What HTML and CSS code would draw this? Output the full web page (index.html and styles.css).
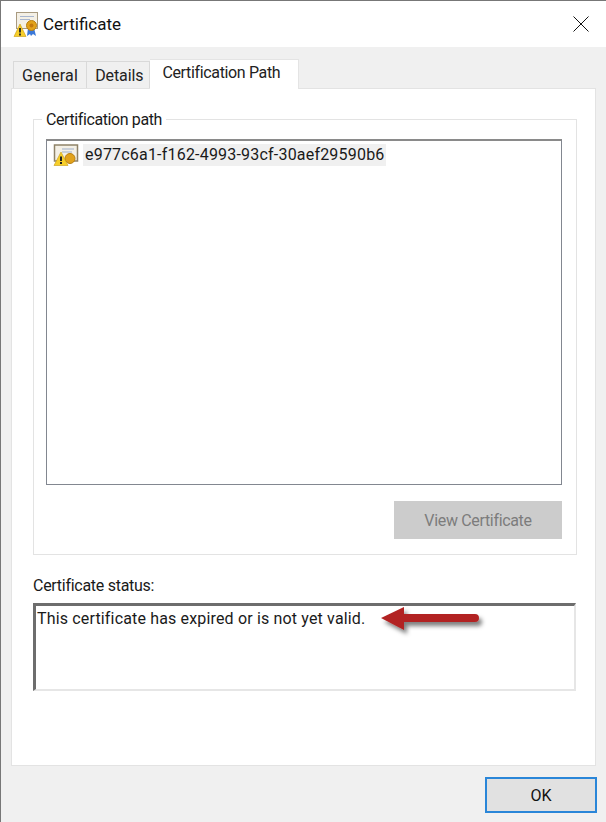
FILE: index.html
```html
<!DOCTYPE html>
<html lang="en">
<head>
    <meta charset="UTF-8">
    <title>Certificate</title>
    <link rel="stylesheet" href="styles.css">
</head>
<body>

    <div class="window">
        <div class="titlebar">
            <svg class="cert-icon" width="26" height="26" viewBox="0 0 26 26">
                <rect x="3.500" y="1.500" width="21" height="16" fill="#f4f0e6" stroke="#a89a80"/>
                <path d="M7 5.500h14M7 8.500h10" stroke="#a8b6cf"/>
                <path d="M15 17l-1 8 3-2 1 2 2-2 3 2-2-8z" fill="#3b78d8"/>
                <circle cx="18.500" cy="14.500" r="5" fill="#e2a21b" stroke="#b97f10"/>
                <circle cx="18.500" cy="14.500" r="2" fill="#c4780f"/>
                <path d="M1 25.500L7 13l6 12.500z" fill="#f7cf2a" stroke="#c79a10" stroke-width=".6"/>
                <path d="M7 17v4.500M7 22.500v2" stroke="#222" stroke-width="1.800"/>
            </svg>
            <span class="title">Certificate</span>
            <svg class="close" width="16" height="16" viewBox="0 0 16 16">
                <path d="M.5 .5l15 15M15.500 .5l-15 15" stroke="#111" fill="none"/>
            </svg>
        </div>

        <div class="content">
            <div class="tabs">
                <div class="tab tab-general">General</div>
                <div class="tab tab-details">Details</div>
                <div class="tab active">Certification Path</div>
            </div>

            <div class="panel">
                <div class="groupbox">
                    <span class="legend">Certification path</span>
                    <div class="path-list">
                        <div class="path-item">
                            <svg class="cert-icon-small" width="26" height="22" viewBox="0 0 26 22">
                                <rect x="1.500" y="1" width="23" height="16" fill="#f4f0e6" stroke="#8f8268" stroke-width="1.500"/>
                                <path d="M9 5h12M9 8h10" stroke="#9fb0cc"/>
                                <circle cx="17" cy="14.500" r="5" fill="#e2a21b" stroke="#b97f10"/>
                                <path d="M1 21.500L8 8l7 13.500z" fill="#f7cf2a" stroke="#c79a10" stroke-width=".6"/>
                                <path d="M8 12.500v4.500M8 18v2" stroke="#222" stroke-width="2"/>
                            </svg>
                            <span class="path-name">e977c6a1-f162-4993-93cf-30aef29590b6</span>
                        </div>
                    </div>
                    <div class="view-row">
                        <button class="btn view-btn" disabled>View Certificate</button>
                    </div>
                </div>

                <div class="status-label">Certificate status:</div>
                <div class="status-box">This certificate has expired or is not yet valid.</div>

                <svg class="arrow" width="112" height="34" viewBox="0 0 112 34">
                    <defs>
                        <filter id="arrow-shadow" x="-20%" y="-40%" width="140%" height="200%">
                            <feDropShadow dx="3" dy="4" stdDeviation="2" flood-color="#000" flood-opacity=".5"/>
                        </filter>
                    </defs>
                    <path d="M2 14L25 3v7h71a4 4 0 0 1 0 8H25v8z" fill="#b22222" filter="url(#arrow-shadow)"/>
                </svg>
            </div>
        </div>

        <div class="footer">
            <button class="btn ok-btn">OK</button>
        </div>
    </div>

</body>
</html>
```

FILE: styles.css
```css
html, body {
    margin: 0;
    padding: 0;
}

body {
    width: 606px;
    height: 822px;
    overflow: hidden;
    font-family: Roboto, "Noto Sans", sans-serif;
    font-size: 16px;
    color: #1a1a1a;
    background: #f0f0f0;
}

.window {
    height: 821px;
    border-top: 1px solid #777;
    border-left: 1px solid #777;
    display: flex;
    flex-direction: column;
}

.titlebar {
    height: 46px;
    flex: none;
    background: #fff;
    display: flex;
    align-items: center;
    padding: 0 17px 0 12px;
    gap: 4px;
}

.title {
    font-size: 17px;
    color: #111;
    flex: 1;
}

.content {
    flex: 1;
    padding: 12px 10px 0 10px;
    display: flex;
    flex-direction: column;
}

.tabs {
    display: flex;
    align-items: flex-end;
    height: 29px;
    padding-left: 2px;
}

.tab {
    height: 27px;
    line-height: 28px;
    padding: 0 8px;
    background: #f0f0f0;
    border: 1px solid #d9d9d9;
    border-bottom: none;
    box-sizing: border-box;
    color: #222;
}

.tab + .tab {
    border-left: none;
}

.tab-general {
    letter-spacing: .25px;
}

.tab-details {
    padding-right: 6px;
    letter-spacing: -.1px;
}

.tab.active {
    height: 30px;
    line-height: 26px;
    padding: 0 18px 0 12px;
    margin-bottom: -1px;
    letter-spacing: -.35px;
    background: #fff;
    border-color: #e4e4e4;
    position: relative;
    z-index: 1;
}

.panel {
    position: relative;
    height: 678px;
    box-sizing: border-box;
    background: #fff;
    border: 1px solid #e3e3e3;
    padding: 30px 18px 0 21px;
}

.groupbox {
    position: relative;
    height: 436px;
    box-sizing: border-box;
    border: 1px solid #e3e3e3;
    padding: 19px 14px 0 12px;
}

.legend {
    position: absolute;
    top: -10px;
    left: 8px;
    padding: 0 4px;
    background: #fff;
    line-height: 20px;
    letter-spacing: -.4px;
}

.path-list {
    height: 346px;
    box-sizing: border-box;
    border: 1px solid #828790;
    border-top: 2px solid #8a8a8a;
    padding: 3px 6px;
}

.path-item {
    display: flex;
    align-items: center;
    height: 22px;
    gap: 4px;
}

.path-name {
    background: #f0f0f0;
    line-height: 22px;
    padding: 0 1px 0 2px;
    letter-spacing: .2px;
}

.view-row {
    display: flex;
    justify-content: flex-end;
    margin-top: 16px;
}

.btn {
    font-family: inherit;
    font-size: 16px;
    box-sizing: border-box;
}

.view-btn {
    width: 168px;
    height: 38px;
    background: #cccccc;
    border: none;
    color: #7c7c7c;
    letter-spacing: -.33px;
}

.status-label {
    margin-top: 21px;
    line-height: 20px;
    letter-spacing: -.28px;
}

.status-box {
    margin-top: 7px;
    width: 543px;
    height: 88px;
    box-sizing: border-box;
    border: 2px solid #e6e6e6;
    border-top: 3px solid #6d6d6d;
    border-left: 3px solid #6d6d6d;
    padding: 3px 1px;
    line-height: 20px;
    letter-spacing: .16px;
}

.arrow {
    position: absolute;
    left: 367px;
    top: 515px;
}

.footer {
    height: 57px;
    flex: none;
    display: flex;
    justify-content: flex-end;
    padding: 11px 9px 0 0;
    box-sizing: border-box;
}

.ok-btn {
    width: 112px;
    height: 36px;
    background: #e1e1e1;
    border: 2px solid #2a86d8;
    color: #111;
    font-size: 16px;
}
```
